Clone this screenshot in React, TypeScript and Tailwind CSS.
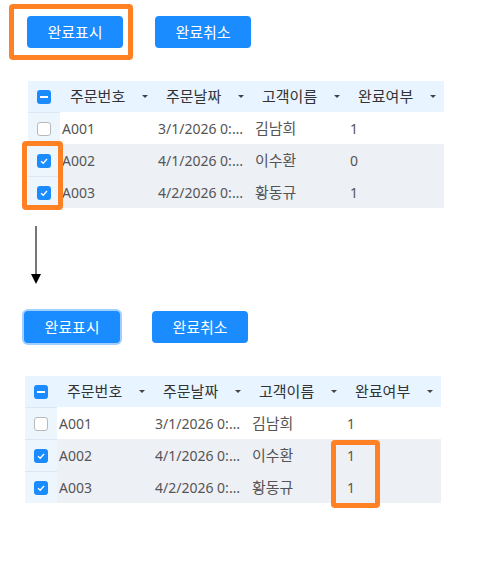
import React from "react";

type Row = { id: string; date: string; name: string; done: string; checked: boolean };

const before: Row[] = [
    { id: "A001", date: "3/1/2026 0:00:00", name: "김남희", done: "1", checked: false },
    { id: "A002", date: "4/1/2026 0:00:00", name: "이수환", done: "0", checked: true },
    { id: "A003", date: "4/2/2026 0:00:00", name: "황동규", done: "1", checked: true },
];

const after: Row[] = before.map((r) => ({ ...r, done: "1" }));

const columns = ["주문번호", "주문날짜", "고객이름", "완료여부"];

// small checkbox used in the grid
function Check({ state }: { state: "on" | "off" | "some" }) {
    if (state === "off") {
        return <div className="w-[14px] h-[14px] rounded-[3px] border border-[#b9b9b9] bg-white" />;
    }
    return (
        <div className="w-[14px] h-[14px] rounded-[3px] bg-[#1a8cff] flex items-center justify-center">
            {state === "some" ? (
                <div className="w-[8px] h-[2px] bg-white" />
            ) : (
                <svg width="10" height="10" viewBox="0 0 10 10">
                    <path d="M2 5.2 L4.2 7.2 L8 3" fill="none" stroke="white" strokeWidth="1.4" />
                </svg>
            )}
        </div>
    );
}

function Caret() {
    return <div className="w-0 h-0 border-l-[3px] border-r-[3px] border-t-[3px] border-l-transparent border-r-transparent border-t-[#444]" />;
}

function Grid({ rows }: { rows: Row[] }) {
    return (
        <div className="w-[416px] text-[14px]">
            <div className="grid grid-cols-[32px_96px_96px_96px_96px] h-[31px] bg-[#e8f4ff] text-[#333]">
                <div className="flex items-center justify-center">
                    <Check state="some" />
                </div>
                {columns.map((c) => (
                    <div key={c} className="flex items-center justify-between pl-[10px] pr-[8px]">
                        <span className="text-[15px]">{c}</span>
                        <Caret />
                    </div>
                ))}
            </div>
            {rows.map((r) => (
                <div
                    key={r.id}
                    className={
                        "grid grid-cols-[32px_96px_96px_96px_96px] h-8 text-[#555] " +
                        (r.checked ? "bg-[#edf0f5]" : "bg-white")
                    }
                >
                    <div className="flex items-center justify-center bg-[#edf5fd] border-t border-[#dbe7f3]">
                        <Check state={r.checked ? "on" : "off"} />
                    </div>
                    <div className="flex items-center pl-[2px]">{r.id}</div>
                    <div className="flex items-center pl-[2px] pr-[6px] min-w-0 overflow-hidden">
                        <span className="truncate">{r.date}</span>
                    </div>
                    <div className="flex items-center pl-[3px] text-[15px]">{r.name}</div>
                    <div className="flex items-center pl-[2px]">{r.done}</div>
                </div>
            ))}
        </div>
    );
}

function Btn({ label, focused }: { label: string; focused?: boolean }) {
    return (
        <button
            className={
                "w-[96px] h-[32px] rounded-[4px] bg-[#1a8cff] text-white text-[15px] " +
                (focused ? "ring-2 ring-[#9fd0ff]" : "")
            }
        >
            {label}
        </button>
    );
}

export default function App() {
    return (
        <div
            className="relative w-[491px] h-[561px] bg-white overflow-hidden"
            style={{ fontFamily: '"Noto Sans", "Noto Sans CJK KR", sans-serif' }}
        >
            {/* before */}
            <div className="pt-[16px] pl-[27px] flex gap-[32px]">
                <Btn label="완료표시" />
                <Btn label="완료취소" />
            </div>
            <div className="mt-[33px] ml-[28px]">
                <Grid rows={before} />
            </div>

            {/* arrow */}
            <div className="ml-[30px] mt-[18px] flex flex-col items-center w-[11px]">
                <div className="w-[2px] h-[48px] bg-[#777]" />
                <div className="w-0 h-0 border-l-[5px] border-r-[5px] border-t-[10px] border-l-transparent border-r-transparent border-t-black" />
            </div>

            {/* after */}
            <div className="mt-[27px] pl-[24px] flex gap-[32px]">
                <Btn label="완료표시" focused />
                <Btn label="완료취소" />
            </div>
            <div className="mt-[33px] ml-[25px]">
                <Grid rows={after} />
            </div>

            {/* orange call-outs */}
            <div className="absolute left-[9px] top-[4px] w-[124px] h-[56px] border-[5px] border-[#ff8124] rounded-[4px]" />
            <div className="absolute left-[22px] top-[141px] w-[41px] h-[69px] border-[5px] border-[#ff8124] rounded-[4px]" />
            <div className="absolute left-[331px] top-[440px] w-[49px] h-[68px] border-[5px] border-[#ff8124] rounded-[4px]" />
        </div>
    );
}
